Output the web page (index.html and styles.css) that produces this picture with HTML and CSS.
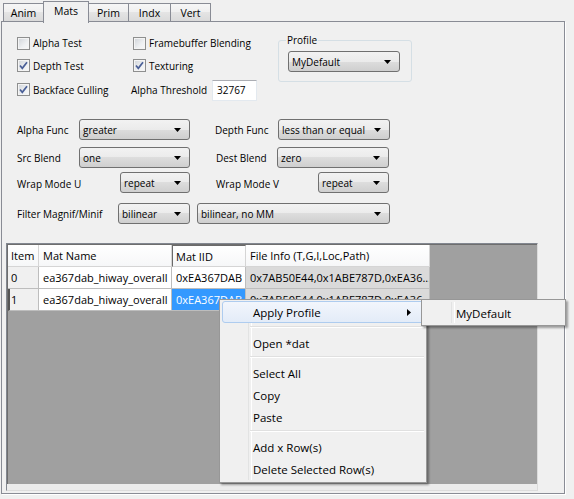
FILE: index.html
```html
<!DOCTYPE html>
<html>
<head>
<meta charset="utf-8">
<link rel="stylesheet" href="styles.css">
</head>
<body>
<div class="tabs">
  <div class="tab w40">Anim</div>
  <div class="tab sel w45">Mats</div>
  <div class="tab w40">Prim</div>
  <div class="tab w42">Indx</div>
  <div class="tab w40">Vert</div>
</div>
<div class="panel">
  <div class="top">
    <div class="chk"><span class="box"></span><span>Alpha Test</span></div>
    <div class="chk c2"><span class="box"></span><span>Framebuffer Blending</span></div>
    <fieldset class="group">
      <legend>Profile</legend>
      <div class="combo w112"><span>MyDefault</span><svg class="arr" width="7" height="4" viewBox="0 0 7 4"><polygon points="0,0 7,0 3.5,4"/></svg></div>
    </fieldset>
    <div class="chk"><span class="box"><svg width="11" height="11" viewBox="0 0 11 11"><path d="M2 5.5 L4.3 8.3 L9 2.2" class="tick"/></svg></span><span>Depth Test</span></div>
    <div class="chk c2"><span class="box"><svg width="11" height="11" viewBox="0 0 11 11"><path d="M2 5.5 L4.3 8.3 L9 2.2" class="tick"/></svg></span><span>Texturing</span></div>
    <div class="chk"><span class="box"><svg width="11" height="11" viewBox="0 0 11 11"><path d="M2 5.5 L4.3 8.3 L9 2.2" class="tick"/></svg></span><span>Backface Culling</span></div>
    <div class="thresh"><span class="tlabel">Alpha Threshold</span><span class="edit">32767</span></div>
  </div>

  <div class="frow ra">
    <div class="half l"><span>Alpha Func</span><div class="combo w111"><span>greater</span><svg class="arr" width="7" height="4" viewBox="0 0 7 4"><polygon points="0,0 7,0 3.5,4"/></svg></div></div>
    <div class="half r"><span>Depth Func</span><div class="combo w112"><span>less than or equal</span><svg class="arr" width="7" height="4" viewBox="0 0 7 4"><polygon points="0,0 7,0 3.5,4"/></svg></div></div>
  </div>
  <div class="frow rb">
    <div class="half l"><span>Src Blend</span><div class="combo w111"><span>one</span><svg class="arr" width="7" height="4" viewBox="0 0 7 4"><polygon points="0,0 7,0 3.5,4"/></svg></div></div>
    <div class="half r r2"><span>Dest Blend</span><div class="combo w112"><span>zero</span><svg class="arr" width="7" height="4" viewBox="0 0 7 4"><polygon points="0,0 7,0 3.5,4"/></svg></div></div>
  </div>
  <div class="frow rc">
    <div class="half l"><span class="lo">Wrap Mode U</span><div class="combo w70"><span>repeat</span><svg class="arr" width="7" height="4" viewBox="0 0 7 4"><polygon points="0,0 7,0 3.5,4"/></svg></div></div>
    <div class="half r r2"><span class="lo">Wrap Mode V</span><div class="combo w71"><span>repeat</span><svg class="arr" width="7" height="4" viewBox="0 0 7 4"><polygon points="0,0 7,0 3.5,4"/></svg></div></div>
  </div>
  <div class="frow rd">
    <span class="flabel">Filter Magnif/Minif</span>
    <div class="combo w72"><span>bilinear</span><svg class="arr" width="7" height="4" viewBox="0 0 7 4"><polygon points="0,0 7,0 3.5,4"/></svg></div>
    <div class="combo w193"><span>bilinear, no MM</span><svg class="arr" width="7" height="4" viewBox="0 0 7 4"><polygon points="0,0 7,0 3.5,4"/></svg></div>
  </div>

  <div class="frame">
    <div class="tview">
      <div class="grid">
        <div class="hd">Item</div>
        <div class="hd">Mat Name</div>
        <div class="hd act">Mat IID</div>
        <div class="hd">File Info (T,G,I,Loc,Path)</div>

        <div class="cl it">0</div>
        <div class="cl">ea367dab_hiway_overall</div>
        <div class="cl">0xEA367DAB</div>
        <div class="cl ro">0x7AB50E44,0x1ABE787D,0xEA36...</div>

        <div class="cl it foc">1</div>
        <div class="cl">ea367dab_hiway_overall</div>
        <div class="cl selc">0xEA367DAB</div>
        <div class="cl ro">0x7AB50E44,0x1ABE787D,0xEA36...</div>
      </div>
    </div>
    <div class="strip"></div>
  </div>
</div>

<div class="menu ctx">
  <div class="mi hot"><span>Apply Profile</span><svg class="sub" width="4" height="7" viewBox="0 0 4 7"><polygon points="0,0 4,3.5 0,7"/></svg></div>
  <div class="sep"></div>
  <div class="mi"><span>Open *dat</span></div>
  <div class="sep"></div>
  <div class="mi"><span>Select All</span></div>
  <div class="mi"><span>Copy</span></div>
  <div class="mi"><span>Paste</span></div>
  <div class="sep"></div>
  <div class="mi"><span>Add x Row(s)</span></div>
  <div class="mi"><span>Delete Selected Row(s)</span></div>
</div>
<div class="menu submenu">
  <div class="mi"><span>MyDefault</span></div>
</div>
</body>
</html>
```
FILE: styles.css
```css
* { box-sizing: border-box; }
html, body {
  margin: 0;
  padding: 0;
  width: 574px;
  height: 499px;
  overflow: hidden;
  background: #f0f0f0;
  font-family: "Open Sans", "Noto Sans", sans-serif;
  font-size: 10px;
  color: #000;
}

/* tabs */
.tabs {
  display: flex;
  align-items: flex-end;
  height: 22px;
  margin: 0 0 0 3px;
  padding-top: 1px;
  position: relative;
  z-index: 2;
  font-size: 10.5px;
}
.tab {
  height: 18px;
  border: 1px solid #898c95;
  border-bottom: none;
  margin-right: -1px;
  background: linear-gradient(#f6f6f6 0%, #efefef 50%, #e4e4e4 50%, #dadada 100%);
  display: flex;
  justify-content: center;
  align-items: center;
  margin-bottom: 1px;
}
.tab.sel {
  height: 22px;
  margin-bottom: -1px;
  background: #f0f0f0;
  align-items: flex-start;
  padding-top: 2px;
  position: relative;
  z-index: 3;
}
.w40 { width: 41px; }
.w42 { width: 43px; }
.w45 { width: 46px; }

.panel {
  position: relative;
  margin-left: 1px;
  width: 564px;
  height: 473px;
  margin-top: -1px;
  border: 1px solid #898c95;
  box-shadow: 1px 1px 0 #ffffff;
  background: #f0f0f0;
}

/* top section */
.top {
  display: grid;
  grid-template-columns: 114px 147px 134px;
  grid-template-rows: 22px 23px 25px;
  margin: 10px 0 0 15px;
}
.chk {
  display: flex;
  align-items: center;
  gap: 3px;
  white-space: nowrap;
}
.c2 { padding-left: 2px; }
.box {
  width: 13px;
  height: 13px;
  border: 1px solid #8e8f8f;
  background: linear-gradient(135deg, #cfd3d8 0%, #eef0f2 60%, #f8f8f8 100%);
  box-shadow: inset 0 0 0 1px #f4f4f4;
  display: flex;
  align-items: center;
  justify-content: center;
  flex: none;
}
.box svg { display: block; }
.tick {
  fill: none;
  stroke: #4a5f97;
  stroke-width: 1.7;
}
.group {
  grid-column: 3;
  grid-row: 1 / span 3;
  align-self: start;
  margin: 0;
  padding: 3px 11px 9px 9px;
  border: 1px solid #d5dfe5;
  border-radius: 3px;
  width: 134px;
}
.group legend {
  padding: 0 1px;
  margin-left: -2px;
  line-height: 16px;
}
.thresh {
  display: flex;
  align-items: center;
  margin-top: 1px;
  white-space: nowrap;
}
.tlabel { width: 81px; flex: none; }
.edit {
  width: 45px;
  height: 21px;
  background: #ffffff;
  border: 1px solid #e3e9ef;
  border-top-color: #abadb3;
  display: flex;
  align-items: center;
  padding-left: 4px;
}

/* combo */
.combo {
  height: 21px;
  border: 1px solid #707070;
  border-radius: 3px;
  background: linear-gradient(#f2f2f2 0%, #ebebeb 50%, #dddddd 50%, #cfcfcf 100%);
  display: flex;
  align-items: center;
  justify-content: space-between;
  padding: 0 8px 0 3px;
  flex: none;
  white-space: nowrap;
}
.arr { display: block; flex: none; }
.w111 { width: 111px; }
.w112 { width: 112px; }
.w70 { width: 70px; }
.w71 { width: 71px; }
.w72 { width: 72px; }
.w193 { width: 193px; }

.frow {
  display: flex;
  align-items: center;
  margin-left: 15px;
  height: 21px;
  white-space: nowrap;
}
.ra { margin-top: 17px; }
.rb { margin-top: 7px; }
.rc { margin-top: 4px; }
.rd { margin-top: 10px; }
.half {
  display: flex;
  align-items: center;
  justify-content: space-between;
}
.half.l { width: 173px; }
.half.r { width: 175px; margin-left: 25px; }
.half.r2 { width: 173px; margin-left: 26px; }
.lo { padding-top: 2px; }
.flabel { width: 101px; flex: none; padding-top: 1px; }
.rd .w193 { margin-left: 7px; }

/* table view */
.frame {
  margin: 19px 0 0 4px;
  width: 532px;
  height: 248px;
  border: 1px solid #828790;
  border-right-color: #dcdcdc;
  border-bottom-color: #dcdcdc;
  display: flex;
  flex-direction: column;
}
.tview {
  height: 240px;
  background: #a0a0a0;
  border-left: 1px solid #6e6e6e;
  border-top: 1px solid #6e6e6e;
  flex: none;
}
.strip {
  flex: 1;
  background: #ececec;
}
.grid {
  display: grid;
  grid-template-columns: 31px 133px 74px 184px;
  grid-auto-rows: 22px;
  width: 422px;
  font-size: 11px;
}
.hd, .cl {
  display: flex;
  align-items: center;
  padding-left: 4px;
  white-space: nowrap;
  overflow: hidden;
  border-right: 1px solid #bdbdbd;
  border-bottom: 1px solid #bdbdbd;
}
.hd {
  background: linear-gradient(#ffffff, #f6f7f8);
  border-right-color: #d5d5d5;
  border-bottom-color: #d5d5d5;
}
.hd:first-child { padding-left: 3px; }
.hd.act {
  border-left: 1px solid #6a6a6a;
  border-top: 1px solid #6a6a6a;
  padding-left: 3px;
}
.cl { background: #ffffff; }
.cl.it { background: #f0f0f0; padding-left: 3px; }
.cl.foc { border-left: 2px solid #555; padding-left: 1px; }
.cl.ro { background: #dadada; }
.cl.selc { background: #3399ff; color: #ffffff; }

/* menus */
.menu {
  position: absolute;
  background: #f0f0f0;
  border: 1px solid #979797;
  box-shadow: 2px 2px 2px rgba(0, 0, 0, 0.35);
  padding: 1px 2px 2px 2px;
  z-index: 10;
  font-size: 11.5px;
}
.menu::before {
  content: "";
  position: absolute;
  top: 2px;
  bottom: 2px;
  left: 28px;
  width: 2px;
  border-left: 1px solid #e2e3e3;
  border-right: 1px solid #ffffff;
}
.ctx { left: 219px; top: 299px; width: 208px; height: 184px; }
.submenu { left: 421px; top: 299px; width: 145px; height: 27px; padding-top: 2px; }
.submenu::before { left: 29px; }
.mi {
  position: relative;
  height: 22px;
  display: flex;
  align-items: center;
  justify-content: space-between;
  padding: 0 12px 0 30px;
  border: 1px solid transparent;
  border-radius: 3px;
}
.submenu .mi { padding-left: 31px; }
.mi.hot {
  border-color: #aeccef;
  background: linear-gradient(#f2f6fc, #e3ecf8);
}
.sub { display: block; }
.sep {
  position: relative;
  height: 8px;
  margin-left: 28px;
}
.sep::after {
  content: "";
  position: absolute;
  left: 0;
  right: 0;
  top: 3px;
  border-top: 1px solid #e0e0e0;
  border-bottom: 1px solid #ffffff;
}
.ctx .mi:nth-of-type(n+3) { top: 1px; }
```
